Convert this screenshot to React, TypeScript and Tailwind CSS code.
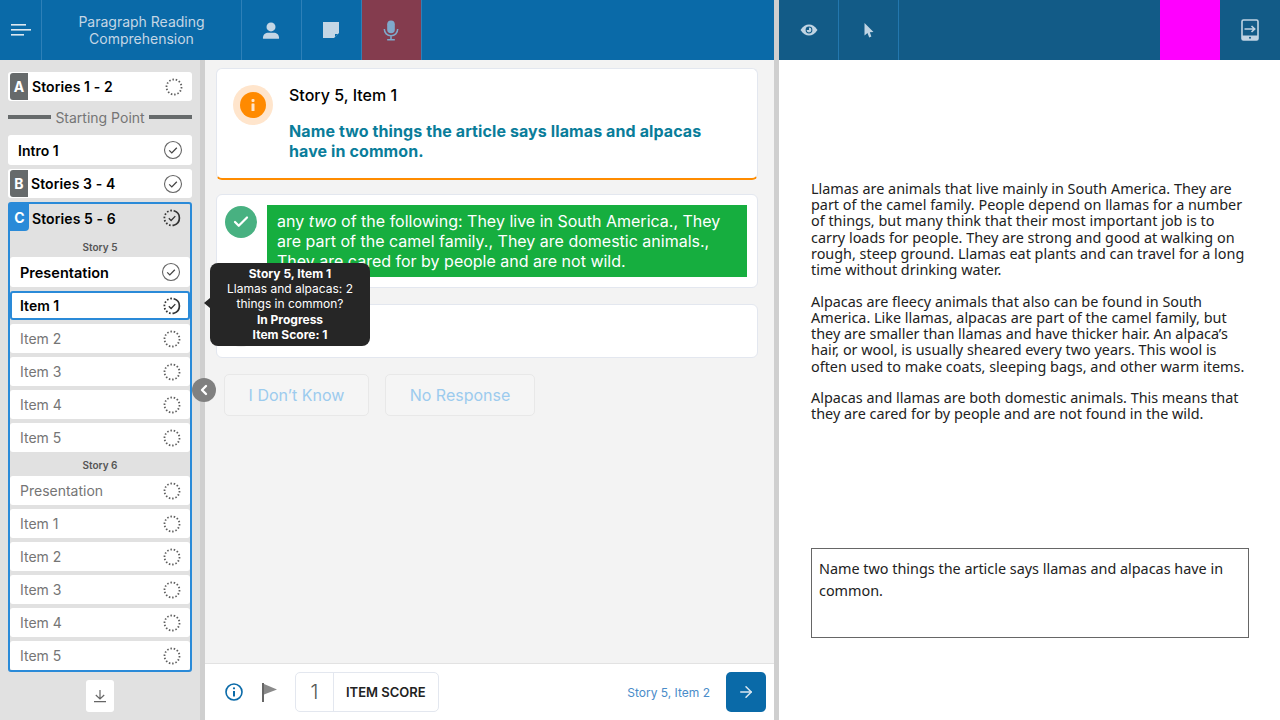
import { ArrowRight, ChevronLeft, Check } from 'lucide-react';

const inter = "font-['Inter',sans-serif]";

function Dotted() {
  return (
    <svg width="18" height="18" viewBox="0 0 18 18" fill="none">
      <circle cx="9" cy="9" r="7.5" stroke="#5f5f5f" strokeWidth="1.8" strokeDasharray="1.5 1.85" />
    </svg>
  );
}

function Done() {
  return (
    <svg width="20" height="20" viewBox="0 0 20 20" fill="none">
      <circle cx="10" cy="10" r="8.5" stroke="#666" strokeWidth="1.1" />
      <path d="M6.2 10.4l2.6 2.5 5-5.2" stroke="#444" strokeWidth="1.3" />
    </svg>
  );
}

function Partial() {
  return (
    <svg width="18" height="18" viewBox="0 0 18 18" fill="none">
      <path d="M11 1.8a7.5 7.5 0 0 1 0 14.4" stroke="#333" strokeWidth="1.7" />
      <path d="M11 16.2a7.5 7.5 0 1 1 0 -14.4" stroke="#333" strokeWidth="1.8" strokeDasharray="1.6 1.8" />
      <path d="M5.8 9.3l2.3 2.2 4.2-4.4" stroke="#333" strokeWidth="1.3" />
    </svg>
  );
}

function Row({ label, done, active, strong }: { label: string; done?: boolean; active?: boolean; strong?: boolean }) {
  const box = active ? 'border-2 border-[#2a8ad8] pl-[8px] pr-[7px]' : 'pl-[10px] pr-[9px]';
  return (
    <div
      className={`flex items-center justify-between h-[29px] rounded-[3px] bg-white text-[14px] ${box} ${
        strong ? 'font-semibold text-black' : 'text-[#757575]'
      }`}
    >
      <span>{label}</span>
      {active ? <Partial /> : done ? <Done /> : <Dotted />}
    </div>
  );
}

function HeaderCell({ children, className = '' }: { children: React.ReactNode; className?: string }) {
  return (
    <div className={`flex items-center justify-center h-full w-[60px] border-r border-[#2e80b8] ${className}`}>{children}</div>
  );
}

function Badge({ letter, color }: { letter: string; color: string }) {
  return (
    <span className={`flex items-center justify-center w-[18px] h-[27px] rounded-bl-[3px] rounded-tl-[3px] text-white font-bold text-[14px] ${color}`}>
      {letter}
    </span>
  );
}

export default function App() {
  return (
    <div className={`${inter} w-[1280px] h-[720px] overflow-hidden flex bg-white`}>
      {/* left side */}
      <div className="flex flex-col w-[774px] shrink-0">
        <header className="flex h-[60px] shrink-0 bg-[#0a6aa8] text-[#c4d6e5]">
          <div className="flex items-center justify-center w-[42px] border-r border-[#2e80b8] pl-[1px]">
            <svg width="21" height="14" viewBox="0 0 21 14" fill="#dce8f1">
              <rect x="0" y="1" width="15" height="1.6" />
              <rect x="0" y="6" width="20" height="1.6" />
              <rect x="0" y="11" width="13" height="1.6" />
            </svg>
          </div>
          <div className="flex items-center justify-center w-[200px] border-r border-[#2e80b8] text-center text-[14px] leading-[17px]">
            Paragraph Reading
            <br />
            Comprehension
          </div>
          <HeaderCell className="pr-[1px]">
            <svg width="18" height="19" viewBox="0 0 20 20" fill="#c4d6e5">
              <circle cx="10" cy="6" r="5" />
              <path d="M1 18.5c0-4 3-6 6-6h6c3 0 6 2 6 6 0 .5-.5 .8-1 .8H2c-.5 0-1-.3-1-.8z" />
            </svg>
          </HeaderCell>
          <HeaderCell className="pr-[1px]">
            <svg width="18" height="18" viewBox="0 0 18 18">
              <path d="M1 1h16v11l-5 5H1z" fill="#c4d6e5" />
              <path d="M13 13h3l-3 3z" fill="#0a6aa8" />
            </svg>
          </HeaderCell>
          <HeaderCell className="bg-[#843c4e] text-[#7fa9cb] pr-[1px]">
            <svg width="16" height="21" viewBox="0 0 16 22" fill="none">
              <rect x="4" y="0.5" width="8" height="13.5" rx="4" fill="#7fa9cb" />
              <path d="M1 9.5c0 4 3 7 7 7s7-3 7-7M8 16.5v3.5M4 20.6h8" stroke="#7fa9cb" strokeWidth="1.6" />
            </svg>
          </HeaderCell>
        </header>

        <div className="relative flex flex-1 min-h-0">
          {/* sidebar */}
          <aside className="flex flex-col w-[200px] shrink-0 bg-[#e1e1e1] px-2 pt-3">
            <div className="flex items-center h-[29px] pl-[2px] pr-[9px] rounded-[3px] bg-white font-semibold text-[14px] text-black">
              <Badge letter="A" color="bg-[#666a6b]" />
              <span className="ml-[4px] flex-1 tracking-[0.1px]">Stories 1 - 2</span>
              <Dotted />
            </div>
            <div className="flex items-center gap-[4px] h-[34px] pb-[2px] text-[14px] text-[#757575]">
              <span className="flex-1 h-[4px] bg-[#666a6b]" />
              Starting Point
              <span className="flex-1 h-[4px] bg-[#666a6b]" />
            </div>
            <div className="flex items-center justify-between h-[30px] pl-[10px] pr-[9px] rounded-[3px] bg-white font-semibold text-[14px] text-black">
              Intro 1
              <Done />
            </div>
            <div className="flex items-center h-[29px] mt-1 pl-[2px] pr-[9px] rounded-[3px] bg-white font-semibold text-[14px] text-black">
              <Badge letter="B" color="bg-[#666a6b]" />
              <span className="ml-[3px] flex-1 tracking-[0.1px]">Stories 3 - 4</span>
              <Done />
            </div>
            <div className="mt-1 border-2 border-[#2a8ad8] rounded-[3px] h-[470px] flex flex-col">
              <div className="flex items-start h-[34px] pr-[9px] font-semibold text-[14px] text-black">
                <span className="flex items-center justify-center w-[19px] h-[27px] rounded-br-[4px] bg-[#2a8ad8] text-white font-bold text-[14px]">C</span>
                <span className="ml-[3px] flex-1 mt-[4px] tracking-[0.1px]">Stories 5 - 6</span>
                <span className="mt-[5px]"><Partial /></span>
              </div>
              <div className="flex items-center justify-center h-[20px] text-[10px] font-semibold text-[#555]">Story 5</div>
              <div className="flex flex-col gap-1">
                <div className="flex items-center justify-between h-[30px] pl-[10px] pr-[9px] rounded-[3px] bg-white font-semibold text-[14.5px] text-black">
                  <span className="pt-[1px]">Presentation</span>
                  <Done />
                </div>
                <Row label="Item 1" strong active />
                <Row label="Item 2" />
                <Row label="Item 3" />
                <Row label="Item 4" />
                <Row label="Item 5" />
              </div>
              <div className="flex items-center justify-center h-[24px] pt-[3px] text-[10px] font-semibold text-[#555]">Story 6</div>
              <div className="flex flex-col gap-1">
                <Row label="Presentation" />
                <Row label="Item 1" />
                <Row label="Item 2" />
                <Row label="Item 3" />
                <Row label="Item 4" />
                <Row label="Item 5" />
              </div>
            </div>
            <div className="flex justify-center mt-2">
              <div className="flex items-center justify-center w-[28px] h-[32px] rounded-[3px] bg-white">
                <svg width="14" height="14" viewBox="0 0 14 14" fill="none" stroke="#666" strokeWidth="1.2">
                  <path d="M7 1v9M2.8 6l4.2 4 4.2-4M1 12.6h12" />
                </svg>
              </div>
            </div>
          </aside>

          <div className="w-[5px] shrink-0 bg-[#cfcfcf]" />

          {/* centre */}
          <main className="flex flex-col flex-1 min-w-0 bg-[#f3f3f3]">
            <div className="flex-1 pl-[11px] pr-[16px] pt-2">
              <div className="flex h-[112px] rounded-[6px] border border-[#e3e7ef] border-b-2 border-b-[#ff8c00] bg-white pl-4 pt-4">
                <span className="flex items-center justify-center w-[40px] h-[40px] rounded-full bg-[#ffe5cc] shrink-0">
                  <span className="flex items-center justify-center w-[26px] h-[26px] rounded-full bg-[#ff8a00]">
                    <svg width="4" height="12" viewBox="0 0 4 12" fill="#ffe5cc">
                      <rect x="0.5" y="0" width="3" height="3" rx="1" />
                      <rect x="0.5" y="4.5" width="3" height="7.5" rx="0.5" />
                    </svg>
                  </span>
                </span>
                <div className="ml-4">
                  <p className="text-[16px] leading-[20px] font-medium text-black">Story 5, Item 1</p>
                  <p className="mt-[16px] text-[16px] leading-[20px] font-bold tracking-[0.1px] text-[#0a7d9a] w-[430px]">
                    Name two things the article says llamas and alpacas have in common.
                  </p>
                </div>
              </div>
              <div className="flex mt-[14px] h-[94px] rounded-[6px] border border-[#e3e7ef] bg-white pl-2 pt-[10px] pr-[10px]">
                <span className="flex items-center justify-center w-[32px] h-[32px] mt-[1px] rounded-full bg-[#48b181] shrink-0 text-white">
                  <Check size={18} strokeWidth={3} />
                </span>
                <p className="ml-[10px] h-[72px] flex-1 bg-[#16ae3f] px-[10px] pt-[6px] text-[16px] leading-[20px] text-white">
                  any <em>two</em> of the following: They live in South America., They are part of the camel family., They are domestic animals., They are cared for by people and are not wild.
                </p>
              </div>
              <div className="flex items-center mt-4 h-[54px] rounded-[6px] border border-[#e3e7ef] bg-white pl-2">
                <span className="w-[32px] h-[32px] rounded-full bg-[#eeeeee]" />
              </div>
              <div className="flex gap-4 mt-4 ml-2">
                <span className="flex items-center justify-center w-[145px] h-[42px] rounded-[5px] border border-[#e8e8e8] bg-[#f5f5f5] text-[16px] text-[#9ccbee]">I Don’t Know</span>
                <span className="flex items-center justify-center w-[150px] h-[42px] rounded-[5px] border border-[#e8e8e8] bg-[#f5f5f5] text-[16px] text-[#9ccbee]">No Response</span>
              </div>
            </div>
            <footer className="flex items-center h-[57px] shrink-0 border-t border-[#e2e2e2] bg-white pl-[19px] pr-2">
              <svg width="20" height="20" viewBox="0 0 20 20" fill="none">
                <circle cx="10" cy="10" r="8" stroke="#0a6aa8" strokeWidth="1.6" />
                <circle cx="10" cy="6.3" r="1.1" fill="#0a6aa8" />
                <path d="M10 9v5.5" stroke="#0a6aa8" strokeWidth="2" />
              </svg>
              <svg className="ml-[17px]" width="18" height="20" viewBox="0 0 18 20">
                <rect x="1" y="1" width="2" height="19" fill="#666" />
                <path d="M3 2l13 5.5-13 5z" fill="#8a8a8a" />
              </svg>
              <div className="flex items-center ml-4 h-[40px] w-[144px] rounded-[5px] border border-[#e3e7ef]">
                <span className="flex items-center justify-center w-[38px] h-full border-r border-[#e3e7ef] text-[20px] font-light text-[#555]">1</span>
                <span className="ml-3 mt-[1px] text-[13px] font-semibold text-[#222]">ITEM SCORE</span>
              </div>
              <span className="ml-auto mt-[1px] text-[12px] text-[#4a8cc9]">Story 5, Item 2</span>
              <button className="flex items-center justify-center ml-4 w-[40px] h-[40px] rounded-[5px] bg-[#0a6aa8] text-[#dce8f1]">
                <ArrowRight size={18} strokeWidth={2} />
              </button>
            </footer>
          </main>

          {/* tooltip over the sidebar and cards */}
          <div className="absolute left-[204px] top-[238px] w-0 h-0 border-y-[5px] border-y-transparent border-r-[6px] border-r-[#262626]" />
          <div className="absolute left-[210px] top-[203px] w-[160px] h-[83px] rounded-[8px] bg-[#262626] px-2 pt-[3px] text-center text-[12px] leading-[15.2px] text-white">
            <p className="font-bold">Story 5, Item 1</p>
            <p>Llamas and alpacas: 2 things in common?</p>
            <p className="font-bold">In Progress</p>
            <p className="font-bold">Item Score: 1</p>
          </div>
          <span className="absolute left-[192px] top-[318px] flex items-center justify-center w-[24px] h-[24px] rounded-full bg-[#808080] text-white">
            <ChevronLeft size={16} strokeWidth={3.5} />
          </span>
        </div>
      </div>

      <div className="w-[5px] shrink-0 bg-[#cfcfcf]" />

      {/* right side */}
      <div className="flex flex-col flex-1 min-w-0">
        <header className="flex h-[60px] shrink-0 bg-[#125b87]">
          <HeaderCell className="border-[#2377ae]">
            <svg width="18" height="12" viewBox="0 0 18 12">
              <path d="M0.5 6C3 2 6 .5 9 .5S15 2 17.5 6C15 10 12 11.5 9 11.5S3 10 .5 6z" fill="#c0d4e3" />
              <circle cx="9" cy="6" r="3.4" fill="#125b87" />
              <path d="M9 3.6a2.4 2.4 0 1 1-2.4 2.4H9z" fill="#c0d4e3" />
            </svg>
          </HeaderCell>
          <HeaderCell className="border-[#2377ae]">
            <svg width="10" height="15" viewBox="0 0 10 15">
              <path d="M.5 0L9.5 9 5.8 9.3 7.4 13.6 5.2 14.6 3.5 10 .5 12.5z" fill="#c0d4e3" />
            </svg>
          </HeaderCell>
          <div className="flex-1" />
          <div className="w-[60px] bg-[#ff00ff]" />
          <div className="flex items-center justify-center w-[60px]">
            <svg width="18" height="22" viewBox="0 0 18 22" fill="none">
              <rect x="1" y="1" width="16" height="20" rx="1.5" stroke="#c0d4e3" strokeWidth="1.6" />
              <rect x="1" y="16.5" width="16" height="4.5" fill="#c0d4e3" />
              <circle cx="9" cy="18.7" r="1" fill="#125b87" />
              <path d="M3.5 10h10M10.5 7l3.2 3-3.2 3" stroke="#c0d4e3" strokeWidth="1.6" />
            </svg>
          </div>
        </header>
        <div className="flex-1 px-8 pt-[121px] font-['Noto_Sans',sans-serif] text-[14.4px] leading-[16.2px] text-[#222]">
          <p className="w-[438px]">
            Llamas are animals that live mainly in South America. They are part of the camel family. People depend on llamas for a number of things, but many think that their most important job is to carry loads for people. They are strong and good at walking on rough, steep ground. Llamas eat plants and can travel for a long time without drinking water.
          </p>
          <p className="w-[438px] mt-[15.5px]">
            Alpacas are fleecy animals that also can be found in South America. Like llamas, alpacas are part of the camel family, but they are smaller than llamas and have thicker hair. An alpaca’s hair, or wool, is usually sheared every two years. This wool is often used to make coats, sleeping bags, and other warm items.
          </p>
          <p className="w-[438px] mt-[15px]">
            Alpacas and llamas are both domestic animals. This means that they are cared for by people and are not found in the wild.
          </p>
          <div className="mt-[125.5px] w-[438px] h-[90px] border border-[#666] px-[7px] pt-[9px] text-[14.4px] leading-[22px]">
            Name two things the article says llamas and alpacas have in common.
          </div>
        </div>
      </div>
    </div>
  );
}
